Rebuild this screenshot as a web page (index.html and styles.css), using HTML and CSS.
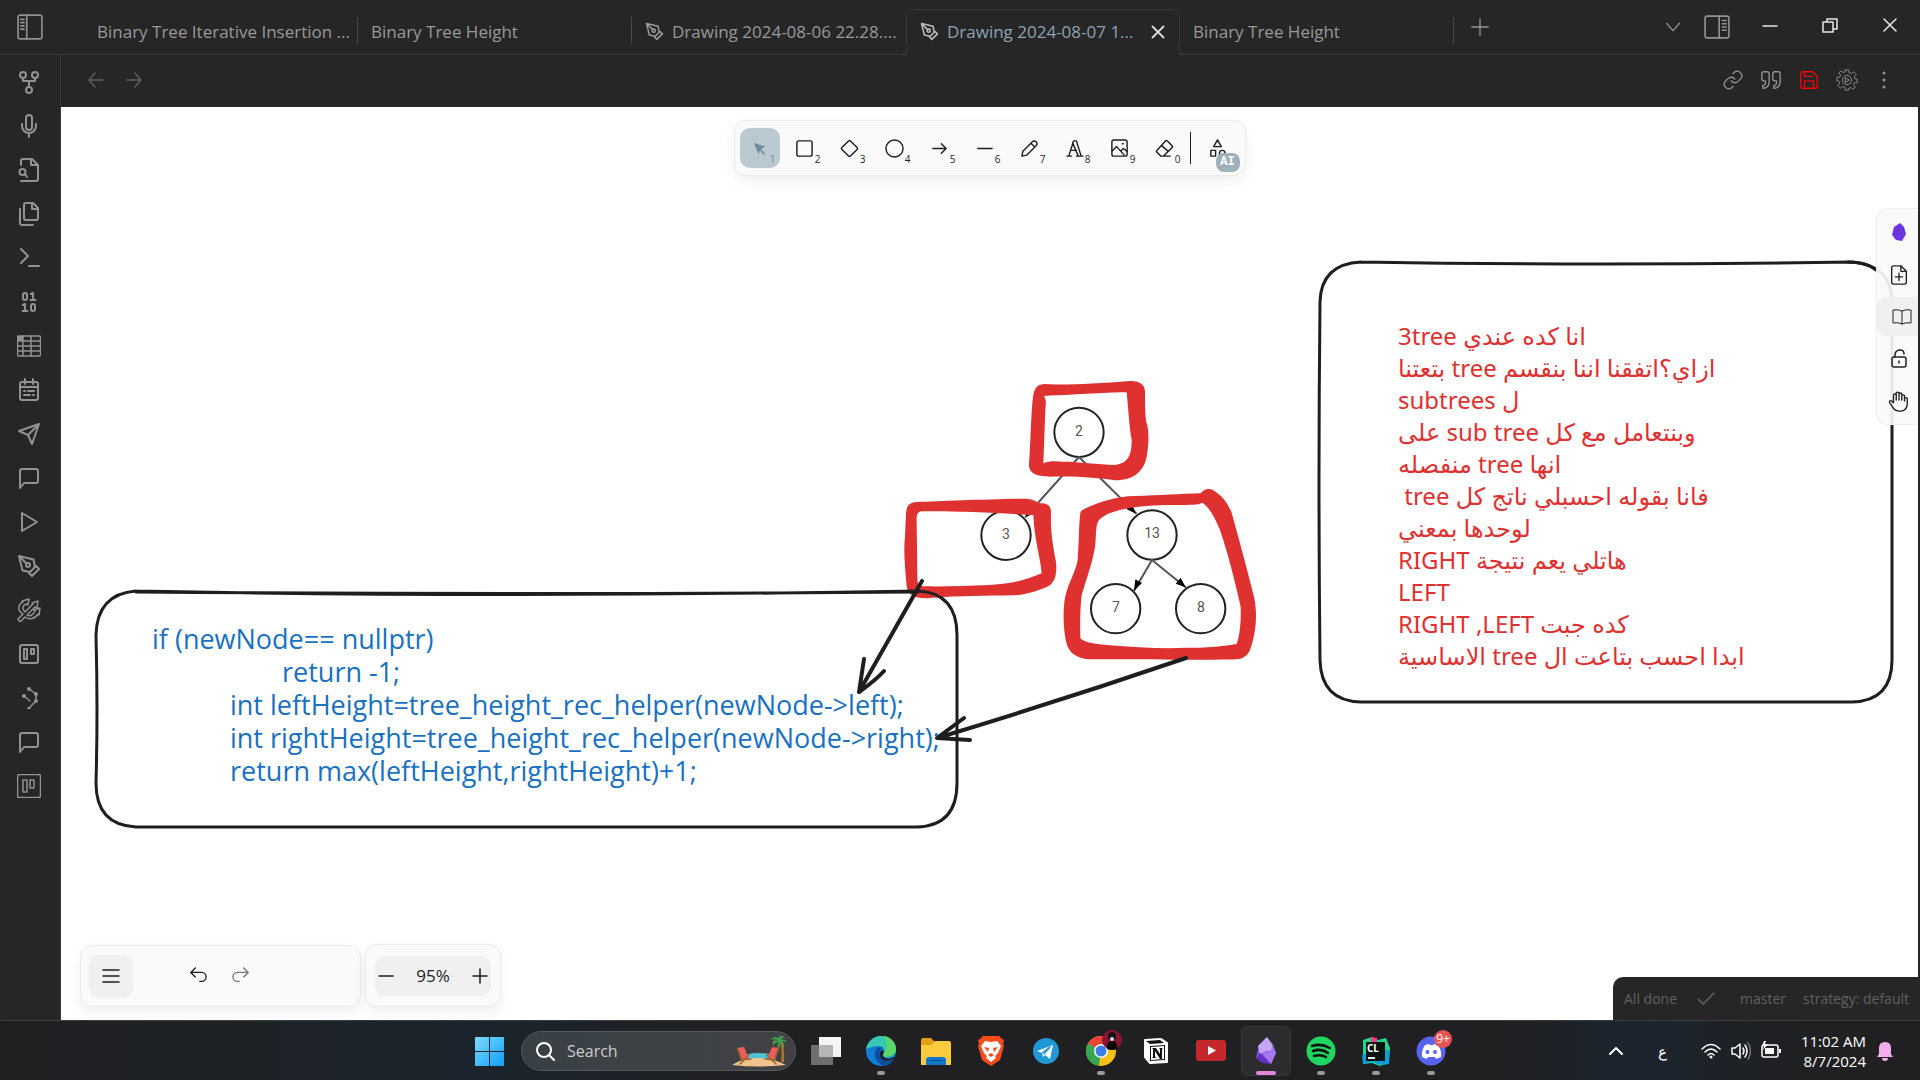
FILE: index.html
```html
<!DOCTYPE html>
<html lang="en">
<head>
<meta charset="utf-8">
<title>Drawing 2024-08-07</title>
<link rel="stylesheet" href="styles.css">
</head>
<body>
<header class="titlebar">
  <button class="icon-btn toggle" aria-label="Toggle left sidebar"><svg viewBox="0 0 24 24" width="26" height="26"><rect x="1" y="1" width="22" height="22" rx="2"/><path d="M9 1v22M3.500 5h3M3.500 8h3M3.500 11h3M3.500 14h3"/></svg></button>
  <nav class="tabs">
    <a class="tab" href="#"><span>Binary Tree Iterative Insertion ...</span></a>
    <a class="tab" href="#"><span>Binary Tree Height</span></a>
    <a class="tab tab-flush" href="#"><svg viewBox="0 0 24 24" width="19" height="19"><use href="#pen"/></svg><span>Drawing 2024-08-06 22.28....</span></a>
    <a class="tab active" href="#"><svg viewBox="0 0 24 24" width="19" height="19"><use href="#pen"/></svg><span>Drawing 2024-08-07 1...</span><svg class="tab-close" viewBox="0 0 24 24" width="22" height="22"><path d="M18 6 6 18M6 6l12 12"/></svg></a>
    <a class="tab" href="#"><span>Binary Tree Height</span></a>
  </nav>
  <button class="icon-btn plus" aria-label="New tab"><svg viewBox="0 0 24 24" width="22" height="22"><path d="M12 3v18M3 12h18"/></svg></button>
  <div class="window-tools">
    <button class="icon-btn" aria-label="Tab list"><svg viewBox="0 0 24 24" width="22" height="22"><path d="m5 8 7 8 7-8"/></svg></button>
    <button class="icon-btn panel" aria-label="Toggle right sidebar"><svg viewBox="0 0 24 24" width="26" height="26"><rect x="1" y="2" width="22" height="20" rx="2"/><path d="M14 2v20M17 6h3.500M17 9h3.500M17 12h3.500M17 15h3.500"/></svg></button>
  </div>
  <div class="window-controls">
    <button class="icon-btn" aria-label="Minimize"><svg viewBox="0 0 16 16" width="16" height="16"><path d="M1 9h14"/></svg></button>
    <button class="icon-btn" aria-label="Restore"><svg viewBox="0 0 16 16" width="16" height="16"><path d="M1 5h10v10H1zM5 5V2h10v10h-4"/></svg></button>
    <button class="icon-btn" aria-label="Close"><svg viewBox="0 0 16 16" width="16" height="16"><path d="m2 2 12 12M14 2 2 14"/></svg></button>
  </div>
</header>

<main class="app">
  <nav class="ribbon">
    <button class="icon-btn" aria-label="Graph"><svg viewBox="0 0 24 24"><circle cx="6" cy="5" r="3"/><circle cx="18" cy="5" r="3"/><circle cx="12" cy="20" r="3"/><path d="M6 8v3h12V8M12 11v6"/></svg></button>
    <button class="icon-btn" aria-label="Record"><svg viewBox="0 0 24 24"><rect x="9" y="1" width="6" height="15" rx="3"/><path d="M5 10v2a7 7 0 0 0 14 0v-2M12 19v4"/></svg></button>
    <button class="icon-btn" aria-label="Search file"><svg viewBox="0 0 24 24"><path d="M4 7V3a2 2 0 0 1 2-2h9l6 6v14a2 2 0 0 1-2 2H4M14 1v6h7"/><circle cx="5.500" cy="14" r="3"/><path d="m8 16 2 3"/></svg></button>
    <button class="icon-btn" aria-label="Files"><svg viewBox="0 0 24 24"><path d="M16 1H9a2 2 0 0 0-2 2v13a2 2 0 0 0 2 2h10a2 2 0 0 0 2-2V6zM15 1v6h6M3 7v14a2 2 0 0 0 2 2h11"/></svg></button>
    <button class="icon-btn" aria-label="Command palette"><svg viewBox="0 0 24 24"><path d="m4 17 7-7-7-7M12 20h10"/></svg></button>
    <button class="icon-btn" aria-label="Binary"><svg viewBox="0 0 24 24"><rect x="6" y="3" width="4" height="7" rx="2"/><rect x="14" y="14" width="4" height="7" rx="2"/><path d="M14 4l2-1v7M13.500 10h5M6 15l2-1v7M5.500 21h5"/></svg></button>
    <button class="icon-btn" aria-label="Table"><svg class="thin" viewBox="0 0 24 24"><rect x="0.500" y="2" width="23" height="20" rx="1"/><path d="M0 7h24M0 12h24M0 17h24M6 2v20M14 2v20"/><path class="solid" d="M1 2h5v5H1z"/></svg></button>
    <button class="icon-btn" aria-label="Calendar"><svg viewBox="0 0 24 24"><rect x="3" y="4" width="18" height="18" rx="2"/><path d="M8 1v5M16 1v5M3 9h18M7 13h1M11 13h6M7 17h6M16 17h1"/></svg></button>
    <button class="icon-btn" aria-label="Publish"><svg viewBox="0 0 24 24"><path d="M22 2 15 22l-4-9-9-4zM22 2 11 13"/></svg></button>
    <button class="icon-btn" aria-label="Comment"><svg viewBox="0 0 24 24"><use href="#bubble"/></svg></button>
    <button class="icon-btn" aria-label="Run"><svg viewBox="0 0 24 24"><path d="m5 3 15 9-15 9z"/></svg></button>
    <button class="icon-btn" aria-label="New drawing"><svg viewBox="0 0 24 24"><use href="#pen"/></svg></button>
    <button class="icon-btn" aria-label="Trident"><svg class="thin" viewBox="0 0 24 24"><path d="m1 21 5-5C0 13 1 6 6 4L5 3l7-2-1 6-2-1c-4 2-4 5-1 8l8-8-1-1 6-2-1 7-2-1-8 8c3 2 6 0 8-4l-1-1 6-2-1 7-1-1c-3 5-9 6-13 3l-5 5z"/></svg></button>
    <button class="icon-btn" aria-label="Board"><svg viewBox="0 0 24 24"><rect x="3" y="3" width="18" height="18" rx="2"/><path d="M7 7h3v10H7zM14 7h3v5h-3z"/></svg></button>
    <button class="icon-btn" aria-label="Nodes"><svg class="thin" viewBox="0 0 24 24"><path d="m12 3 7 5v7l-7 7M7 10l6 5"/><g class="solid"><circle cx="12" cy="3" r="2"/><circle cx="19" cy="8" r="2"/><circle cx="19" cy="15" r="2"/><circle cx="7" cy="10" r="2"/><path d="M10 23a2 2 0 0 1 4 0z"/></g></svg></button>
    <button class="icon-btn" aria-label="Chat"><svg viewBox="0 0 24 24"><use href="#bubble"/></svg></button>
    <button class="icon-btn" aria-label="Kanban"><svg class="thin" viewBox="0 0 24 24"><rect x="0.500" y="0.500" width="23" height="23" rx="2"/><path d="M6 6h4v12H6zM13 6h4v8h-4z"/></svg></button>
  </nav>

  <section class="workspace">
    <header class="view-header">
      <div class="history">
        <button class="icon-btn" aria-label="Back"><svg viewBox="0 0 20 20" width="20" height="20"><path d="M17 10H3M9 3l-6 7 6 7"/></svg></button>
        <button class="icon-btn" aria-label="Forward"><svg viewBox="0 0 20 20" width="20" height="20"><path d="M3 10h14M11 3l6 7-6 7"/></svg></button>
      </div>
      <div class="view-actions">
        <button class="icon-btn" aria-label="Link"><svg viewBox="0 0 24 24" width="22" height="22"><path d="M10 13a5 5 0 0 0 7.500.5l3-3a5 5 0 0 0-7-7L12 5M14 11a5 5 0 0 0-7.500-.5l-3 3a5 5 0 0 0 7 7L12 19"/></svg></button>
        <button class="icon-btn" aria-label="Quote"><svg viewBox="0 0 24 24" width="22" height="22"><path d="M3 21c3 0 7-1 7-8V5a2 2 0 0 0-2-2H4a2 2 0 0 0-2 2v6c0 1 1 2 2 2h2c0 3 0 5-3 5zM15 21c3 0 7-1 7-8V5a2 2 0 0 0-2-2h-4a2 2 0 0 0-2 2v6c0 1 1 2 2 2h2c0 3 0 5-3 5z"/></svg></button>
        <button class="icon-btn save" aria-label="Save"><svg viewBox="0 0 24 24" width="22" height="22"><path d="M19 21H5a2 2 0 0 1-2-2V5a2 2 0 0 1 2-2h11l5 5v11a2 2 0 0 1-2 2z"/><path d="M17 21v-8H7v8M7 3v5h8"/></svg></button>
        <button class="icon-btn" aria-label="Script engine"><svg class="fine" viewBox="0 0 24 24" width="22" height="22"><path d="M10 1h4v3l3 1 2-2 3 3-2 2 1 3h2v4h-3l-1 2 2 3-3 2-2-2-2 1v2h-4v-3l-3-1-2 2-3-3 2-2-1-3H1V9h3l1-2-2-3 3-2 2 2 2-1z"/><circle cx="12" cy="12" r="5"/><path d="m10.500 9.500 4 2.500-4 2.500z"/></svg></button>
        <button class="icon-btn" aria-label="More options"><svg viewBox="0 0 20 20" width="20" height="20"><g class="solid"><circle cx="10" cy="3" r="1.500"/><circle cx="10" cy="10" r="1.500"/><circle cx="10" cy="17" r="1.500"/></g></svg></button>
      </div>
    </header>

    <div class="canvas">
      <svg class="drawing" viewBox="61 107 1857 913" preserveAspectRatio="xMinYMin slice">
        <g transform="translate(880 360) scale(0.333333)">
          <g class="tree-art">
            <circle cx="597" cy="217" r="74"/><circle cx="378" cy="526" r="74"/><circle cx="816" cy="525" r="74"/><circle cx="707" cy="746" r="74"/><circle cx="962" cy="746" r="74"/>
            <path class="edge" d="M597 291 437 470M597 291 768 460M816 600l-54 92M816 600l100 81"/>
            <path class="head" d="m437 472 12-29 16 15zM768 461l-29-14 16-16zM762 692l4-34 20 11zM917 682l-30-11 15-18z"/>
          </g>
          <g class="marker">
            <path d="M495 72C540 76 650 71 750 63 780 62 795 75 795 95 795 130 795 170 800 190 808 215 806 255 801 285 794 330 765 361 705 361 655 354 600 348 510 350 480 349 447 345 447 315 452 240 453 160 459 110 463 82 475 72 495 72ZM491 108C500 119 498 130 496 150L490 310C510 301 530 304 550 305 600 305 650 313 705 315 745 310 755 285 755 240 749 210 745 150 740 97 690 97 600 103 491 108Z"/>
            <path d="M110 426C180 424 330 417 440 416 460 418 470 425 480 430 505 430 515 438 513 465 511 510 519 560 527 600 533 640 525 670 500 681 460 698 420 706 400 706 320 708 240 707 150 714 110 717 85 708 80 680 75 620 70 570 75 530L78 460C80 435 90 427 110 426ZM125 454C112 456 109 465 110 485L112 650C112 670 115 680 130 679 200 680 260 678 330 675 400 670 440 660 485 640 481 590 463 540 460 465 420 464 300 454 125 454Z"/>
            <path d="M607 450C650 428 710 408 765 408 840 406 900 402 962 400 970 388 985 382 1000 391 1025 407 1040 425 1054 455 1075 530 1105 640 1122 710 1133 760 1129 820 1110 870 1103 887 1090 896 1070 898 960 902 800 896 640 898 600 899 575 885 563 860 548 820 548 740 557 705 567 665 587 635 593 600 597 550 597 490 600 470 600 460 602 453 607 450ZM660 477C644 490 650 530 645 560 637 610 618 660 605 705 600 750 600 790 601 835 615 849 640 851 680 855 770 862 850 867 920 863 980 864 1030 859 1070 852 1082 820 1083 770 1082 740 1068 680 1050 600 1020 510 1005 475 988 440 966 428 955 436 930 434 860 435 760 437 690 450 660 477Z"/>
          </g>
        </g>
        <g class="ink">
          <path d="M136 591Q500 598 918 591 957 593 957 635V783Q957 826 917 827H136Q96 825 96 783 98 710 96 635 97 594 136 591M136 592Q540 595 918 592"/>
          <path d="M1361 262Q1600 266 1852 262 1892 265 1892 302V660Q1892 701 1852 702H1361Q1321 701 1320 660 1318 480 1320 302 1321 264 1361 262"/>
          <path d="M1848 262Q1866 262 1876 270"/>
          <path class="arrow" d="M922 581Q900 620 859 692L864 659M859 692Q876 680 884 671M1186 658Q1060 701 937 738L964 718M937 738L970 740"/>
        </g>
        <g class="node-label"><text x="1079" y="436">2</text><text x="1006" y="539">3</text><text x="1152" y="538">13</text><text x="1116" y="612">7</text><text x="1201" y="612">8</text></g>
      </svg>
      <pre class="note note-code">if (newNode== nullptr)
<span class="indent-2">return -1;</span>
<span class="indent-1">int leftHeight=tree_height_rec_helper(newNode-&gt;left);</span>
<span class="indent-1">int rightHeight=tree_height_rec_helper(newNode-&gt;right);</span>
<span class="indent-1">return max(leftHeight,rightHeight)+1;</span></pre>
      <pre class="note note-arabic" dir="rtl" lang="ar">انا كده عندي 3tree
ازاي؟اتفقنا اننا بنقسم tree بتعتنا
ل subtrees
وبنتعامل مع كل sub tree على
انها tree منفصله
فانا بقوله احسبلي ناتج كل tree 
لوحدها بمعني
هاتلي يعم نتيجة RIGHT
LEFT
كده جبت RIGHT ,LEFT
ابدا احسب بتاعت ال tree الاساسية</pre>

      <div class="island toolbar">
        <button class="tool selected" aria-label="Selection"><svg viewBox="0 0 20 20"><path class="solid" d="m4 4 12 4-5 3-2 5z"/><path d="m11 11 4 5"/></svg><kbd>1</kbd></button>
        <button class="tool" aria-label="Rectangle"><svg viewBox="0 0 20 20"><rect x="2" y="2" width="16" height="16" rx="2"/></svg><kbd>2</kbd></button>
        <button class="tool" aria-label="Diamond"><svg viewBox="0 0 20 20"><path d="M9 2q1-1 2 0l7 7q1 1 0 2l-7 7q-1 1-2 0l-7-7q-1-1 0-2z"/></svg><kbd>3</kbd></button>
        <button class="tool" aria-label="Ellipse"><svg viewBox="0 0 20 20"><circle cx="10" cy="10" r="9"/></svg><kbd>4</kbd></button>
        <button class="tool" aria-label="Arrow"><svg viewBox="0 0 20 20"><path d="M3 10h14M12 5l5 5-5 5"/></svg><kbd>5</kbd></button>
        <button class="tool" aria-label="Line"><svg viewBox="0 0 20 20"><path d="M3 10h15"/></svg><kbd>6</kbd></button>
        <button class="tool" aria-label="Draw"><svg viewBox="0 0 20 20"><path d="m2 18 1-5L13 3q2-2 4 0t0 4L7 17zM12 5l3 3"/></svg><kbd>7</kbd></button>
        <button class="tool" aria-label="Text"><svg viewBox="0 0 20 20"><path d="M2 18h5M12 18h7M4 18 9 2h3l5 16M6 12h6M8 4l6 14"/></svg><kbd>8</kbd></button>
        <button class="tool" aria-label="Image"><svg viewBox="0 0 20 20"><rect x="2" y="1" width="16" height="17" rx="2"/><path d="m2 13 5-5 8 9M12 12l2-2 4 3M13 5h1"/></svg><kbd>9</kbd></button>
        <button class="tool" aria-label="Eraser"><svg viewBox="0 0 20 20"><path d="M16 18H6l-4-4q-1-1 0-2L11 2q1-1 2 0l5 5q1 1 0 2l-9 9M7 7l7 6"/></svg><kbd>0</kbd></button>
        <span class="divider"></span>
        <button class="tool" aria-label="More tools"><svg viewBox="0 0 20 20"><path d="m10 1 4 7H6zM3 12h5v6H3z"/><circle cx="15" cy="15" r="3"/></svg><span class="badge">AI</span></button>
      </div>

      <div class="side-panel">
        <button class="side-btn" aria-label="Obsidian"><svg class="gem" viewBox="0 0 20 20" width="20" height="20"><path d="m11 0 4 4 2 7-4 7-6-1-4-5 2-8z"/></svg></button>
        <button class="side-btn" aria-label="Insert file"><svg viewBox="0 0 24 24" width="22" height="22"><path d="M14 2H6a2 2 0 0 0-2 2v16a2 2 0 0 0 2 2h12a2 2 0 0 0 2-2V8zM14 2v6h6M12 10v8M8 14h8"/></svg></button>
        <button class="side-btn lit" aria-label="Library"><svg class="fine" viewBox="0 0 20 20" width="20" height="20"><path d="M10 4Q6 2 1 3v13q5-1 9 1 4-2 9-1V3q-5-1-9 1v13"/></svg></button>
        <button class="side-btn" aria-label="Unlock"><svg viewBox="0 0 20 20" width="20" height="20"><rect x="3" y="8" width="14" height="10" rx="2"/><path d="M6 8V5q1-4 5-4t4 4M10 12v2"/></svg></button>
        <button class="side-btn" aria-label="Hand"><svg viewBox="0 0 24 24" width="22" height="22"><path d="M18 12V6a2 2 0 0 0-3 0v5-7a2 2 0 0 0-3 0v7-8a2 2 0 0 0-3 0v8-6a2 2 0 0 0-3 0v9l-2-2c-2-1-3 0-2 2l4 6q2 3 6 3h2q6 0 7-7V9a2 2 0 0 0-3 0"/></svg></button>
      </div>

      <footer class="canvas-footer">
        <div class="island menu-island">
          <button class="menu-btn" aria-label="Menu"><svg viewBox="0 0 20 20" width="20" height="20"><path d="M2 4h16M2 10h16M2 16h16"/></svg></button>
          <div class="undo-redo">
            <button class="bare" aria-label="Undo"><svg viewBox="0 0 20 20" width="18" height="18"><path d="M7 11 2 6l5-5M2 6h12a5 5 0 0 1 0 10h-2"/></svg></button>
            <button class="bare dim" aria-label="Redo"><svg viewBox="0 0 20 20" width="18" height="18"><path d="m13 11 5-5-5-5M18 6H6a5 5 0 0 0 0 10h2"/></svg></button>
          </div>
        </div>
        <div class="island zoom-island">
          <div class="zoom-group">
            <button class="bare" aria-label="Zoom out"><svg viewBox="0 0 16 16" width="16" height="16"><path d="M1 8h14"/></svg></button>
            <button class="bare zoom-value">95%</button>
            <button class="bare" aria-label="Zoom in"><svg viewBox="0 0 16 16" width="16" height="16"><path d="M1 8h14M8 1v14"/></svg></button>
          </div>
        </div>
      </footer>

      <div class="status-bar">
        <span>All done</span>
        <svg viewBox="0 0 20 20" width="20" height="20"><path d="m2 10 5 5L18 4"/></svg>
        <span>master</span>
        <span class="strategy">strategy: default</span>
      </div>
    </div>
  </section>
</main>

<footer class="taskbar">
  <div class="task-apps">
    <button class="task" aria-label="Start"><svg viewBox="0 0 30 30"><path fill="url(#win)" d="M1 1h14v14H1zM16 1h14v14H16zM1 16h14v14H1zM16 16h14v14H16z"/></svg></button>
    <label class="search">
      <svg viewBox="0 0 20 20" width="20" height="20"><circle cx="9" cy="9" r="7"/><path d="m14 14 5 5"/></svg>
      <input type="text" placeholder="Search" aria-label="Search">
      <svg class="beach" viewBox="0 0 54 32" width="54" height="32"><ellipse cx="27" cy="23" rx="17" ry="5" fill="#4fc3d6"/><path d="M0 30q12-8 27-7t27 7q-27 3-54 0z" fill="#f0c48c"/><path d="M47 4q4 10 2 23l3 0q1-12-3-23z" fill="#b4742a"/><path d="M47 6q-8-3-6 5 2-4 6-4-3 4 0 7 1-3 1-7 4 2 3 7 3-4-1-8 5 0 5 3 0-6-7-4 3-4 6-1-4-6-8-1-4-3-7 2 4-2 8 1z" fill="#3fa34d"/><path d="m5 13 7-1 5 12-8 1zM47 13l-7-1-5 12 8 1z" fill="#ef5b5b"/><path d="m6 14 4 11 9-1M8 29l9-9M46 14l-4 11-9-1M44 29l-9-9" fill="none" stroke="#a0622a" stroke-width="1.500"/></svg>
    </label>
    <button class="task" aria-label="Task view"><svg viewBox="0 0 30 30"><path fill="#f5f5f5" d="M8 1h22v20H8z"/><path fill="#6f6f6f" d="M0 9h22v20H0z"/><path fill="#b5b5b5" d="M8 9h14v12H8z"/></svg></button>
    <button class="task running" aria-label="Edge"><svg viewBox="0 0 30 30"><circle cx="15" cy="15" r="15" fill="#0f7fd6"/><path d="M0 13C2 4 9 0 15 0c9 0 15 6 15 13 0 5-4 8-9 8-4 0-4-2-3-4 2-4-2-7-6-7-5 0-9 2-12 3z" fill="#36c8b0"/><path d="M18 0c7 1 12 7 12 13 0 5-4 8-9 8-4 0-4-2-3-4q6-6 0-17z" fill="#5ad868"/><path d="M12 11c-6 5-4 15 6 19 6-1 9-5 10-7-8 4-15 1-14-6 0-3 1-4 3-5q-2-2-5-1z" fill="#0d4f9e"/><path d="M14 17c-1 7 6 10 14 6q2-2 0-2c-4 3-10 2-11-1-1-2 2-3 0-6-2 0-3 2-3 3z" fill="#202023"/></svg></button>
    <button class="task" aria-label="File Explorer"><svg viewBox="0 0 30 30"><path fill="#e0a010" d="M0 4q0-2 2-2h8l3 3v6H0z"/><path fill="#fbca3e" d="M0 9h10l4-4h14q2 0 2 2v22H0z"/><path fill="#1178cc" d="M5 29v-5q0-3 3-3h14q3 0 3 3v5z"/><path fill="#0b4c8a" d="M9 24h12v1H9z"/></svg></button>
    <button class="task" aria-label="Brave"><svg viewBox="0 0 30 30"><path fill="#fb4a1c" d="m7 0h16l3 3 2 1-1 4 1 2-4 14-9 6-9-6L2 10l1-2-1-4 2-1z"/><path fill="#fff" d="m9 5 6 1 6-1 4 5-3 7-3 3 1 2-5 4-5-4 1-2-3-3-3-7z"/><path fill="#fb4a1c" d="m8 11 5 1-1 4zM22 11l-5 1 1 4zM12 19l3 2 3-2-3-2z"/></svg></button>
    <button class="task" aria-label="Telegram"><svg viewBox="0 0 30 30"><circle cx="15" cy="15" r="13" fill="#2098d6"/><path fill="#fff" d="m6 15 16-6-3 14-5-4-2 2-1-4z"/><path stroke="#2098d6" d="m11 17 8-6-6 7"/></svg></button>
    <button class="task running" aria-label="Chrome"><svg viewBox="0 0 30 30"><circle cx="15" cy="15" r="15" fill="#fbc116"/><path d="M15 15 2 7.500A15 15 0 0 1 28 7.500z" fill="#ea4335"/><path d="M15 15 13 30A15 15 0 0 1 2 7.500z" fill="#34a853"/><path d="m15 15 13-7-5-5z" fill="#ea4335"/><circle cx="15" cy="15" r="7" fill="#fff"/><circle cx="15" cy="15" r="5.500" fill="#3b7ded"/><circle cx="26" cy="4" r="10" fill="#8b1430"/><circle cx="26" cy="0" r="4" fill="#111"/><path d="M21 13q-1-8 5-8t5 8q-5 2-10 0z" fill="#090909"/><circle cx="26" cy="3" r="2" fill="#ddd"/></svg></button>
    <button class="task" aria-label="Notion"><svg viewBox="0 0 30 30"><path fill="#fff" stroke="#fff" stroke-width="2" stroke-linejoin="round" d="m4 4 16-1 6 4v19l-17 1-5-6z"/><path fill="#111" d="m5 5 14-1 4 3-14 1zM9 10l15-1v15l-15 1z"/><path fill="#fff" d="m10 11 13-1v13l-13 1z"/><path fill="#111" d="M11 12h4l4 6v-5l-1-1h4l-1 1v10h-2l-5-8v6l2 1h-5l1-1v-8z"/></svg></button>
    <button class="task" aria-label="YouTube"><svg viewBox="0 0 30 30"><rect y="4" width="30" height="21" rx="3" fill="#c4282c"/><path fill="#fff" d="m12 10 8 4.500-8 4.500z"/></svg></button>
    <button class="task running current" aria-label="Obsidian"><svg viewBox="0 0 30 30"><path fill="#8655dd" d="M16 1 8 9l-3 13 15 6 5-11z"/><path fill="#c4a6f8" d="m16 1-9 9 2 8 6-3 5 0 2-6z"/><path fill="#a678f0" d="m20 15-9 2 9 11 5-11-3-8z"/><path fill="#6431c0" d="m9 17-4 5 6 5 9 1z"/></svg></button>
    <button class="task running" aria-label="Spotify"><svg viewBox="0 0 30 30"><circle cx="15" cy="15" r="14.500" fill="#1ed760"/><path fill="none" stroke="#111" stroke-linecap="round" stroke-width="2.500" d="M6 10q9-3 18 2M7 15q8-3 15 2M8 20q7-2 12 1"/></svg></button>
    <button class="task running" aria-label="CLion"><svg viewBox="0 0 30 30"><path fill="#20d68a" d="m2 4 9-3 6 3 8-2 4 10-1 15-9 3-8-3-9 1z"/><path fill="#0b9edb" d="m1 19 7-2 20-3v14l-8 1-8-3-10 2z"/><path fill="#f43a86" d="m10 1 6 1v5h-6z"/><path fill="#07130f" d="M5 6h19v19H5z"/><path fill="#fff" d="M7 21h7v2H7z"/><text x="6" y="16" class="app-letter">CL</text></svg></button>
    <button class="task running" aria-label="Discord"><svg viewBox="0 0 30 30"><circle cx="15" cy="15" r="14.500" fill="#5865f2"/><path fill="#fff" d="m9 9 4-1 1 1h3l1-1 4 1q4 6 3 12l-5 2-1-2h-7l-1 2-5-2q-1-6 3-12z"/><circle cx="11.500" cy="16" r="2" fill="#5865f2"/><circle cx="19" cy="16" r="2" fill="#5865f2"/></svg><span class="count">9+</span></button>
  </div>
  <div class="tray">
    <button class="tray-btn caret" aria-label="Hidden icons"><svg viewBox="0 0 16 16" width="16" height="16"><path d="m2 11 6-6 6 6"/></svg></button>
    <span class="lang" lang="ar">ع</span>
    <div class="tray-icons">
      <svg viewBox="0 0 20 20" width="20" height="20"><path d="M1 8q9-9 18 0M4 11q6-6 12 0M7 14q3-3 6 0"/><circle class="solid" cx="10" cy="16" r="1.500"/></svg>
      <svg viewBox="0 0 20 20" width="20" height="20"><path d="M1 7h3l5-4v14l-5-4H1zM12 7q2 3 0 6M14 4q4 6 0 12"/><path opacity="0.350" d="M17 2q5 8 0 16"/></svg>
      <svg viewBox="0 0 20 20" width="20" height="20"><rect x="1" y="4" width="16" height="12" rx="2"/><path class="solid" d="M4 7h9v6H4zM18 8h2v4h-2zM3 0 1 5h2L2 9l5-6H4l1-3z"/></svg>
    </div>
    <time class="clock">11:02 AM<br>8/7/2024</time>
    <svg class="bell" viewBox="0 0 16 20" width="16" height="20"><path d="M0 16 2 13V7q0-6 6-6t6 6v6l2 3zM5 17h6q0 3-3 3t-3-3z"/></svg>
  </div>
</footer>

<svg class="defs" aria-hidden="true">
  <defs>
    <g id="pen"><path d="m12 19 7-7 3 3-7 7zM18 13l-1.500-7.500L2 2l3.500 14.500L13 18zM2 2l7.500 7.500"/><circle cx="11" cy="11" r="2"/></g>
    <path id="bubble" d="M21 15a2 2 0 0 1-2 2H7l-4 5V5a2 2 0 0 1 2-2h14a2 2 0 0 1 2 2z"/>
    <linearGradient id="win" x2="1" y2="1"><stop stop-color="#7edaff"/><stop offset="1" stop-color="#0fa0fb"/></linearGradient>
  </defs>
</svg>
</body>
</html>
```

FILE: styles.css
```css
* { box-sizing: border-box; }

body {
  margin: 0;
  min-height: 100vh;
  display: flex;
  flex-direction: column;
  background: #262626;
  color: #999;
  font-family: "Open Sans", "Noto Sans", sans-serif;
  font-size: 17px;
  overflow: hidden;
}

button { margin: 0; padding: 0; border: 0; background: none; color: inherit; font: inherit; }
svg { display: block; flex: none; fill: none; stroke: currentColor; stroke-width: 2; stroke-linecap: round; stroke-linejoin: round; }
.thin { stroke-width: 1.5; }
.solid { fill: currentColor; stroke: none; }
.defs { position: absolute; width: 0; height: 0; }

.icon-btn { display: flex; align-items: center; justify-content: center; color: #929292; }

/* Title bar and tabs */
.titlebar { height: 55px; flex: none; display: flex; border-bottom: 1px solid #383838; }
.titlebar .icon-btn svg { stroke-width: 1.5; }
.toggle { width: 60px; }
.tabs { display: grid; grid-template-columns: repeat(5, minmax(0, 1fr)); flex: 0 1 1370px; margin-left: 24px; min-width: 0; }
.tab {
  position: relative;
  min-width: 0;
  height: 46px;
  margin-top: 9px;
  padding: 0 12px 2px 13px;
  display: flex;
  align-items: center;
  gap: 8px;
  color: #999;
  text-decoration: none;
  white-space: nowrap;
}
.tab-flush { padding-right: 0; }
.tab::after { content: ""; position: absolute; right: 0; top: 8px; height: 27px; width: 1px; background: #484848; }
.tab-flush::after { display: none; }
.tab.active {
  color: #8da3b5;
  background: #262626;
  border: 1px solid #383838;
  border-bottom: 0;
  border-radius: 9px 9px 0 0;
}
.tab.active svg { color: #bbb; }
.tab.active .tab-close { color: #ddd; margin-left: auto; margin-right: -2px; }
.tab.active::before, .tab.active::after {
  content: "";
  position: absolute;
  top: auto;
  bottom: 0;
  width: 8px;
  height: 8px;
  background: #262626;
  border: solid #383838;
}
.tab.active::before { left: -8px; border-width: 0 1px 1px 0; border-radius: 0 0 8px 0; }
.tab.active::after { right: -8px; border-width: 0 0 1px 1px; border-radius: 0 0 0 8px; }
.plus { width: 52px; }
.window-tools { display: flex; margin-left: auto; gap: 20px; }
.window-controls { display: flex; margin: 0 22px 4px 32px; gap: 44px; }
.window-controls .icon-btn { color: #e8e8e8; width: 16px; }

/* Left ribbon */
.app { flex: 1; display: flex; min-height: 0; }
.ribbon { width: 61px; flex: none; padding: 15px 2px 0 0; border-right: 1px solid #383838; display: flex; flex-direction: column; align-items: center; gap: 20px; }
.ribbon svg { width: 24px; height: 24px; }

/* Main view */
.workspace { flex: 1; min-width: 0; display: flex; flex-direction: column; padding-right: 2px; }
.view-header { height: 52px; flex: none; display: flex; align-items: center; justify-content: space-between; padding: 0 24px 2px 25px; }
.view-header .icon-btn svg { stroke-width: 1.5; }
.view-header .icon-btn .fine, .side-btn .fine { stroke-width: 1; }
.view-actions { display: flex; gap: 16px; }
.history { display: flex; gap: 18px; }
.history .icon-btn { color: #606060; }
.view-header .save { color: #f00000; }

.canvas { position: relative; flex: 1; overflow: hidden; background: #fff; color: #1e1e1e; display: flex; flex-direction: column; justify-content: space-between; }
.drawing { position: absolute; inset: 0; width: 100%; height: 100%; }
.tree-art { stroke: #222; stroke-width: 6; }
.tree-art .edge { stroke: #555; }
.tree-art .head { fill: #000; stroke: none; }
.marker { fill: #e03131; stroke: none; fill-rule: evenodd; }
.ink { stroke: #1e1e1e; stroke-width: 3; }
.arrow { stroke-width: 4; }
.node-label { fill: #555; stroke: none; font: 14px Roboto, sans-serif; text-anchor: middle; }
.note { position: absolute; margin: 0; line-height: 33px; }
.note-code { left: 91px; top: 515px; color: #1971c2; font-family: "Open Sans", sans-serif; font-size: 27px; }
.indent-1 { padding-left: 78px; }
.indent-2 { padding-left: 130px; }
.note-arabic { left: 1337px; top: 213px; color: #e03131; font-family: "Noto Sans", "DejaVu Sans", sans-serif; font-size: 24px; line-height: 32px; text-align: left; }

/* Drawing tools */
.island { background: #fafafa; border: 1px solid #ebebeb; border-radius: 12px; box-shadow: 0 6px 14px rgba(0, 0, 0, 0.06); }
.toolbar { position: relative; align-self: center; margin-top: 13px; height: 56px; padding: 0 7px 0 5px; display: flex; align-items: center; gap: 5px; }
.tool { position: relative; width: 40px; height: 40px; border-radius: 10px; display: grid; place-items: center; }
.tool svg { width: 19px; height: 19px; stroke-width: 1.5; }
.tool kbd { position: absolute; right: 4px; bottom: 2px; font: 10px "Open Sans", sans-serif; }
.tool.selected { background: #bac9d1; color: #6f8b9b; }
.divider { width: 1px; height: 32px; background: #1e1e1e; margin-right: 2px; }
.badge { position: absolute; right: -2px; bottom: -4px; width: 24px; height: 19px; border-radius: 8px; background: #9eb0ba; color: #fff; font: bold 12px/19px "Liberation Mono", monospace; text-align: center; }

.side-panel { position: absolute; right: 0; top: 101px; width: 42px; padding: 4px 0; background: rgba(250, 250, 250, 0.92); border: 1px solid #eee; border-right: 0; border-radius: 12px 0 0 12px; display: flex; flex-direction: column; gap: 3px; }
.side-btn { height: 39px; padding-left: 2px; display: grid; place-items: center; border-radius: 10px 0 0 10px; color: #222; }
.side-btn svg { stroke-width: 1.5; }
.side-btn.lit { background: #f0f0f0; padding-left: 8px; }
.side-btn .gem { fill: #6d35e0; stroke: none; }

.canvas-footer { position: relative; display: flex; align-items: flex-end; gap: 4px; padding: 0 19px 13px; }
.menu-island { width: 281px; height: 62px; padding: 0 8px; display: flex; align-items: center; }
.menu-btn { width: 44px; height: 43px; border-radius: 10px; background: #f0f0f0; display: grid; place-items: center; }
.menu-btn svg { stroke-width: 1.5; }
.undo-redo { display: flex; gap: 25px; margin-left: 56px; }
.bare svg { stroke-width: 1.5; }
.dim { color: #777; }
.zoom-island { height: 63px; padding: 0 9px; display: flex; align-items: center; }
.zoom-group { height: 40px; width: 116px; padding: 0 3px; display: flex; align-items: center; justify-content: space-between; border-radius: 10px; background: #f0f0f0; }

.status-bar { position: absolute; right: -2px; bottom: 0; height: 43px; padding: 0 11px; display: flex; align-items: center; border-top-left-radius: 10px; background: #262626; color: #606060; font-size: 14px; }
.status-bar svg { stroke-width: 1.5; margin: 0 24px 0 19px; }
.strategy { margin-left: 17px; }

/* Taskbar */
.taskbar { height: 60px; flex: none; display: flex; justify-content: space-between; border-top: 1px solid #3c3c3e; background: linear-gradient(90deg, #202022, #1b242c 25%, #202023 40%, #202022 78%, #1b242e 85%, #202022 94%); color: #fff; }
.taskbar svg { stroke-width: 1.5; }
.task-apps { display: flex; align-items: center; gap: 5px; margin-left: 464px; }
.task { position: relative; width: 50px; height: 50px; border: 1px solid transparent; border-radius: 6px; display: grid; place-items: center; }
.task svg { width: 30px; height: 30px; stroke: none; overflow: visible; }
.running::after { content: ""; position: absolute; bottom: 0; left: 20px; width: 8px; height: 4px; border-radius: 2px; background: #999; }
.current { background: #2c2c2f; border-color: #363638; }
.current::after { left: 14px; width: 20px; background: #e087dc; }
.app-letter { fill: #fff; font: bold 10px "Open Sans", sans-serif; }
.count { position: absolute; right: 3px; top: 3px; width: 18px; height: 18px; border-radius: 9px; background: #ed5252; font-size: 12px; line-height: 17px; text-align: center; }
.search { width: 275px; height: 40px; margin-left: 2px; padding: 0 9px 0 13px; display: flex; align-items: center; gap: 12px; border: 1px solid #55595d; border-radius: 20px; background: linear-gradient(90deg, #394045, #3c4246 50%, #434144); }
.search input { flex: 1; min-width: 0; padding: 0; border: 0; outline: 0; background: none; color: #ccc; font: 16px "Open Sans", sans-serif; }
.search input::placeholder { color: #ccc; opacity: 1; }
.search svg { stroke-width: 2; }
.search .beach { stroke: none; }
.tray { display: flex; align-items: center; padding-right: 27px; }
.lang { margin: 0 34px; font-size: 15px; }
.tray-icons { display: flex; gap: 10px; margin-right: 20px; }
.tray .caret svg { stroke-width: 2; }
.clock { text-align: right; font-size: 15px; line-height: 20px; }
.taskbar .bell { fill: #f2aeea; stroke: none; margin-left: 11px; }
```
